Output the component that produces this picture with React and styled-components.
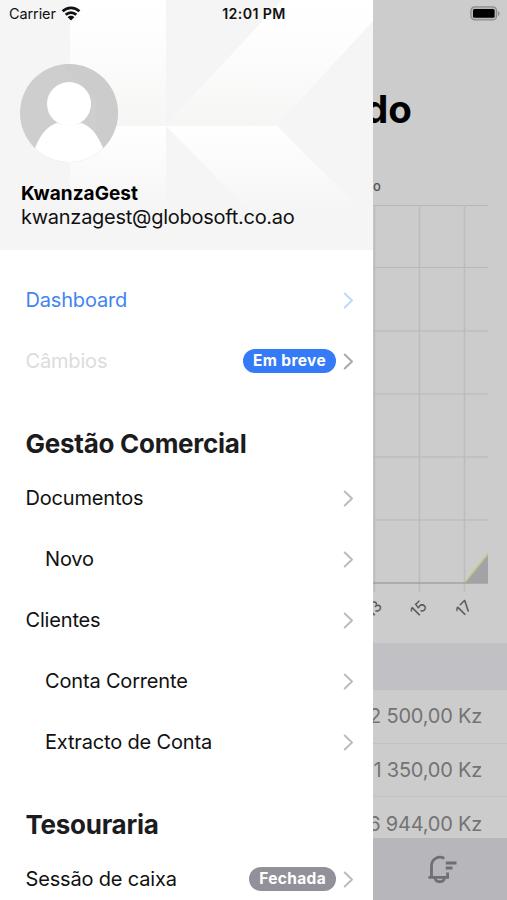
import React from "react";
import styled, { createGlobalStyle } from "styled-components";

const GlobalStyle = createGlobalStyle`
  * {
    box-sizing: border-box;
  }
  body {
    margin: 0;
    font-family: Inter, "Liberation Sans", sans-serif;
    color: #111;
    background: #fff;
  }
`;

const Screen = styled.div`
  position: relative;
  display: flex;
  width: 507px;
  height: 900px;
  overflow: hidden;
`;

const StatusBar = styled.div`
  position: absolute;
  top: 0;
  left: 0;
  right: 0;
  z-index: 2;
  display: grid;
  grid-template-columns: 1fr auto 1fr;
  align-items: center;
  height: 27px;
  padding: 0 7px 0 9px;
  font-size: 14.5px;
`;

const Carrier = styled.div`
  display: flex;
  align-items: center;
  gap: 5px;
  letter-spacing: -0.1px;
`;

const Clock = styled.div`
  margin-right: 1px;
  font-size: 14.2px;
  font-weight: 600;
  letter-spacing: 0.4px;
`;

const BatterySlot = styled.div`
  display: flex;
  justify-content: flex-end;
`;

const Drawer = styled.aside`
  flex: none;
  width: 373px;
  background: #fff;
`;

const Header = styled.header`
  position: relative;
  height: 250px;
  padding: 64px 20px 0;
  background: #f5f5f5;
`;

const Watermark = styled.svg`
  position: absolute;
  top: 0;
  left: 0;
`;

const Profile = styled.div`
  position: relative;
  display: flex;
  flex-direction: column;
`;

const UserName = styled.div`
  margin: 20px 0 0 1px;
  font-size: 19px;
  font-weight: 700;
  line-height: 24px;
  letter-spacing: 0.05px;
  color: #000;
`;

const Email = styled.div`
  margin-left: 1px;
  font-size: 20px;
  line-height: 22px;
  letter-spacing: -0.26px;
`;

const Menu = styled.nav`
  padding: 19.5px 19.5px 0 25.5px;
`;

const SectionTitle = styled.h2`
  margin: 0;
  padding-top: 27px;
  height: 75.8px;
  font-size: 26px;
  font-weight: 650;
  line-height: 49px;
  letter-spacing: -0.27px;
  color: #1c1c1e;
`;

const Row = styled.div`
  display: flex;
  align-items: center;
  height: 61.1px;
  padding-left: ${(p) => (p.$nested ? 19.5 : 0)}px;
  font-size: 20px;
  color: ${(p) => p.$color || "#111"};
`;

const RowLabel = styled.span`
  flex: 1;
  letter-spacing: -0.17px;
`;

const Badge = styled.span`
  height: 24px;
  margin-right: 7px;
  padding: 0 9.5px 0 10px;
  border-radius: 12px;
  background: ${(p) => p.$color};
  color: #fff;
  font-size: 15.5px;
  font-weight: 700;
  line-height: 24px;
  letter-spacing: 0.35px;
`;

const Page = styled.main`
  flex: 1;
  display: flex;
  flex-direction: column;
  min-width: 0;
  overflow: hidden;
  background: #ccc;
`;

const PageTitle = styled.h1`
  margin: 85px 0 0 -9px;
  font-size: 38.5px;
  font-weight: 700;
  line-height: 48px;
  color: #000;
`;

const Legend = styled.div`
  margin-top: 45px;
  font-size: 13px;
  font-weight: 500;
  line-height: 16px;
  color: #555;
`;

const Chart = styled.svg`
  flex: none;
  display: block;
  margin-top: 6px;
`;

const TableHeader = styled.div`
  flex: none;
  height: 47px;
  background: #c1c0c5;
`;

const AmountRow = styled.div`
  flex: none;
  display: flex;
  align-items: center;
  justify-content: flex-end;
  height: 53.7px;
  padding-right: 25px;
  border-bottom: 1px solid #c3c3c4;
  font-size: 20px;
  letter-spacing: -0.22px;
  white-space: nowrap;
  color: #737373;
`;

const Amounts = styled.div`
  height: 148px;
  overflow: hidden;
`;

const TabBar = styled.div`
  flex: 1;
  display: flex;
  justify-content: center;
  padding: 16px 0 0 4px;
  background: #b7b6bb;
`;

const MENU = [
  { label: "Dashboard", color: "#4285f0", arrow: "#bfd7fb" },
  { label: "Câmbios", color: "#dcdcdd", badge: "Em breve", badgeColor: "#357bf7", arrow: "#aaa" },
  { title: "Gestão Comercial" },
  { label: "Documentos" },
  { label: "Novo", nested: true },
  { label: "Clientes" },
  { label: "Conta Corrente", nested: true },
  { label: "Extracto de Conta", nested: true },
  { title: "Tesouraria" },
  { label: "Sessão de caixa", badge: "Fechada", badgeColor: "#929199" },
];

const AMOUNTS = ["2 500,00 Kz", "1 350,00 Kz", "6 944,00 Kz"];

const GRID_Y = [5.5, 67.5, 131, 194, 257, 320];
const DAYS = [
  { x: 1.5, day: "13" },
  { x: 46.5, day: "15" },
  { x: 91.5, day: "17" },
];

function Wifi() {
  return (
    <svg width="20" height="15" viewBox="0 0 20 15" fill="none" stroke="#111" strokeWidth="2.7">
      <path d="M1.6 5.3C6.3.7 13.7.7 18.4 5.3" />
      <path d="M4.7 8.7c3-2.9 7.6-2.9 10.6 0" />
      <path d="M10 14.4 6.7 11.2c1.8-1.8 4.8-1.8 6.6 0z" fill="#111" stroke="none" />
    </svg>
  );
}

function Battery() {
  return (
    <svg width="30" height="15" viewBox="0 0 30 15">
      <rect x=".9" y=".9" width="25.7" height="13" rx="4" fill="#b8b8b8" stroke="#8b8b8b" strokeWidth="1.3" />
      <rect x="3" y="3" width="21.6" height="8.8" rx="1.6" fill="#000" />
      <path d="M28 5v5c2-.8 2-4.2 0-5z" fill="#8b8b8b" />
    </svg>
  );
}

function Avatar() {
  return (
    <svg width="98" height="98" viewBox="0 0 98 98">
      <defs>
        <clipPath id="avatar">
          <circle cx="49" cy="49" r="49" />
        </clipPath>
      </defs>
      <g clipPath="url(#avatar)">
        <rect width="98" height="98" fill="#cecece" />
        <path d="M40 0h58v98H76V34z" fill="#c9c9c9" opacity=".5" />
        <circle cx="49" cy="40" r="22" fill="#fff" />
        <path d="M15 84C21 69 28 62 37 59q12 5 24 0c9 3 16 10 22 25v14H15z" fill="#fff" />
      </g>
    </svg>
  );
}

function HeaderMark() {
  return (
    <Watermark width="373" height="250" viewBox="0 0 373 250">
      <defs>
        <linearGradient id="top" x1="0" y1="0" x2="0" y2="125" gradientUnits="userSpaceOnUse">
          <stop offset="0" stopColor="#fff" />
          <stop offset=".35" stopColor="#fdfdfd" />
          <stop offset="1" stopColor="#f6f6f5" />
        </linearGradient>
        <linearGradient id="bottom" x1="0" y1="126" x2="0" y2="212" gradientUnits="userSpaceOnUse">
          <stop offset="0" stopColor="#fff" />
          <stop offset="1" stopColor="#f5f5f5" />
        </linearGradient>
      </defs>
      <path d="M70 0h96v125H70z" fill="url(#top)" />
      <path d="M282 0h91v21L277 125h-111z" fill="url(#top)" />
      <path d="M70 126h96v124H70z" fill="url(#bottom)" />
      <path d="M166 126h111l86 86H250z" fill="url(#bottom)" />
    </Watermark>
  );
}

function Chevron({ color = "#bcbcbe" }) {
  return (
    <svg width="11" height="17" viewBox="0 0 11 17" fill="none" stroke={color} strokeWidth="2">
      <path d="M1.7 1.5 9 8.5l-7.3 7" strokeLinecap="round" strokeLinejoin="round" />
    </svg>
  );
}

function BellIcon() {
  return (
    <svg width="30" height="30" viewBox="0 0 30 30" fill="none" stroke="#6f6f73" strokeWidth="2.8">
      <path d="M17.3 4.4C11.5 1.2 4.5 5 4.5 12v11M1.5 23.4h20.5M20.6 18.5v5" />
      <path d="M8 24c1 5 8.5 5 9.5 0" />
      <path d="M18.8 9H29.5M18.8 14h6.7" />
    </svg>
  );
}

function MovementsChart() {
  return (
    <Chart width="134" height="443" viewBox="0 0 134 443">
      {GRID_Y.map((y) => (
        <path key={y} d={`M0 ${y}h115`} stroke="#b7b7b7" />
      ))}
      {DAYS.map(({ x, day }) => (
        <g key={day}>
          <path d={`M${x} 5v387`} stroke="#bdbdbd" strokeWidth="1.6" />
          <text
            transform={`translate(${x + 8.5} 407) rotate(-45)`}
            textAnchor="end"
            fontSize="15.5"
            fill="#555"
          >
            {day}
          </text>
        </g>
      ))}
      <path d="M92 383 115 355v28z" fill="#a3a2a6" />
      <path d="M92 382.5 115 353.5" stroke="#c3c47a" strokeWidth="1.3" />
      <path d="M0 383h115" stroke="#a2a2a2" strokeWidth="1.5" />
    </Chart>
  );
}

export default function App() {
  return (
    <>
      <GlobalStyle />
      <Screen>
        <StatusBar>
          <Carrier>
            Carrier <Wifi />
          </Carrier>
          <Clock>12:01 PM</Clock>
          <BatterySlot>
            <Battery />
          </BatterySlot>
        </StatusBar>
        <Drawer>
          <Header>
            <HeaderMark />
            <Profile>
              <Avatar />
              <UserName>KwanzaGest</UserName>
              <Email>kwanzagest@globosoft.co.ao</Email>
            </Profile>
          </Header>
          <Menu>
            {MENU.map((item) =>
              item.title ? (
                <SectionTitle key={item.title}>{item.title}</SectionTitle>
              ) : (
                <Row key={item.label} $nested={item.nested} $color={item.color}>
                  <RowLabel>{item.label}</RowLabel>
                  {item.badge && <Badge $color={item.badgeColor}>{item.badge}</Badge>}
                  <Chevron color={item.arrow} />
                </Row>
              )
            )}
          </Menu>
        </Drawer>
        <Page>
          <PageTitle>do</PageTitle>
          <Legend>o</Legend>
          <MovementsChart />
          <TableHeader />
          <Amounts>
            {AMOUNTS.map((amount) => (
              <AmountRow key={amount}>{amount}</AmountRow>
            ))}
          </Amounts>
          <TabBar>
            <BellIcon />
          </TabBar>
        </Page>
      </Screen>
    </>
  );
}
